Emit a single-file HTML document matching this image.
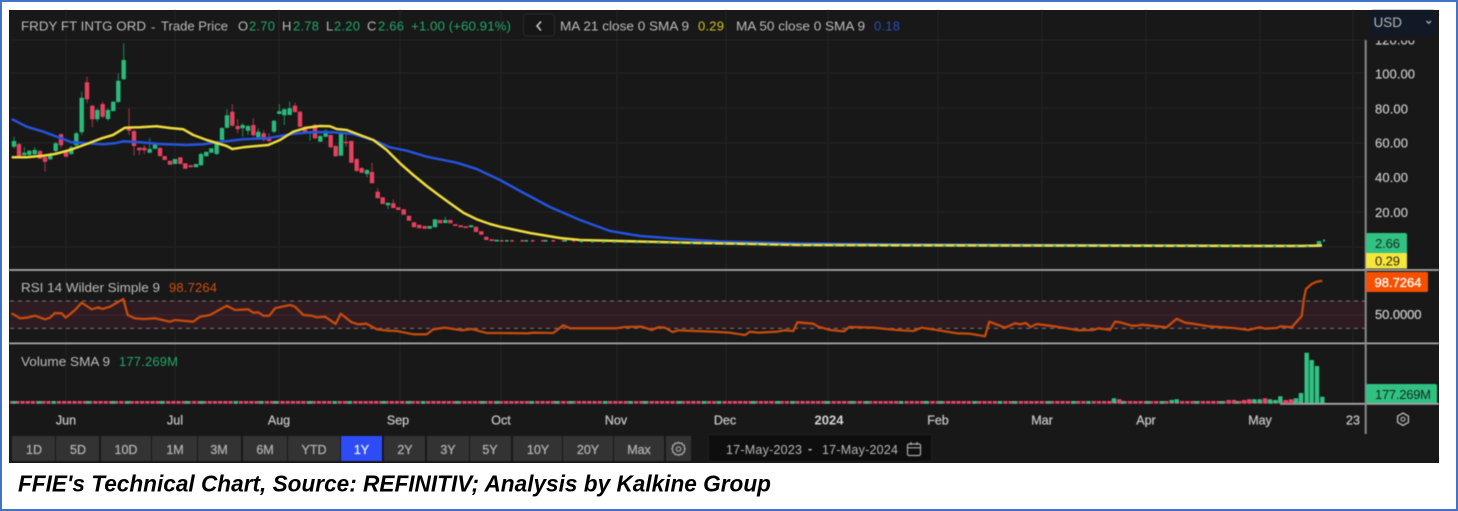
<!DOCTYPE html>
<html><head><meta charset="utf-8"><style>
html,body{margin:0;padding:0;background:#fff;width:1458px;height:511px;overflow:hidden}
svg{display:block}
text{font-family:"Liberation Sans",sans-serif}
.b{filter:blur(.5px)}
.h{font-size:13px;fill:#bcbcbc}
.g{font-size:13px;fill:#22a869}
.y{font-size:13px;fill:#c8c8c8;stroke:#c8c8c8;stroke-width:.2}
.x{font-size:12.5px;fill:#c0c0c0;stroke:#c0c0c0;stroke-width:.3;text-anchor:middle}
.t{font-size:12.5px;fill:#aeaeae;stroke:#aeaeae;stroke-width:.3;text-anchor:middle}
</style></head><body>
<svg width="1458" height="511" viewBox="0 0 1458 511" xmlns="http://www.w3.org/2000/svg">
<rect width="1458" height="511" fill="#fff"/>
<rect x="1" y="1" width="1456" height="509" fill="none" stroke="#4472c4" stroke-width="2"/>
<rect x="9" y="10" width="1430" height="453" fill="#181818"/>
<g class="b">
<path d="M10 40H1365M10 73H1365M10 108H1365M10 143H1365M10 177H1365M10 212H1365M10 247H1365M66 10V403M175 10V403M279 10V403M400 10V403M501 10V403M617 10V403M726 10V403M828 10V403M938 10V403M1042 10V403M1146 10V403M1260 10V403M1353 10V403" stroke="#242424" stroke-width="1" fill="none"/>

<path d="M14 136.7V148.3M24.3 147V156M29.3 150V156M34.7 147V155M50.3 152.7V160M55.7 141.7V152.7M71.3 146V155M76.3 131.7V146.7M81.7 91.7V135M97.3 108.3V121.7M108 108.3V120.7M113.3 101V111.7M118.3 73.3V102.7M123.7 43.3V80M149.7 138.3V153.3M155 143.3V149.3M201 152.7V165.7M216.7 140.7V155M222 127.3V140.7M227 109.3V128.3M242.7 123V136.7M248 125V135M258.3 128.3V137.3M274 120V133.3M279.3 104V114M284.3 108.3V125M289.7 101.7V115M310 130.7V140.7M320.3 135V141.7M325.7 129.3V137.3M341 132.7V155.7M367 169.3V177.3M388 202.7V209.3M445.3 216.7V223.3" stroke="#1b7a54" stroke-width="1.2" fill="none"/>
<path d="M19 142.7V156.7M40 150V159M45 156.7V171.7M61 133.3V148.3M66 150V157.3M87 76.7V103.3M92.3 105V127.3M102.7 101.7V118.3M129 108.3V135M134 130V155.7M139.3 147.3V155M144.3 145V154M160 147.3V156.7M232.3 104V126.7M237.7 119.3V133.3M253.3 118.3V136.7M263.7 130V141.7M269 133.3V142.7M295 102.7V112.7M300 110.7V127.3M305 126V134M315 124V139.3M330.7 134.3V148.3M335.7 145V156.7M346 135V146.7M351.3 140.7V162.7M356.7 158.3V171.7M361.7 167.3V173.3M372 162.7V183.3M377.7 188.3V198.3M393.3 199.3V208.3" stroke="#8f3347" stroke-width="1.2" fill="none"/>

<path d="M14 141V146.7M24.3 152.7V155M29.3 150.7V154.7M34.7 150V154.3M50.3 156V159.3M55.7 143.3V151M71.3 147.3V154M76.3 133.3V145.3M81.7 97.7V132.3M97.3 110V119.3M108 110V119M113.3 101.7V111M118.3 80.7V102M123.7 60V79.3M149.7 149V152.7M155 144.3V148.7M175 159V164M196 164V167.3M201 154V165.3M206.3 151.7V156.3M211.3 148.3V152.7M216.7 142V154M222 128V140M227 115.3V127.7M242.7 125V128.3M248 126V130.7M258.3 131.7V137.3M274 120.7V131.7M279.3 111.3V114M284.3 109.3V115.3M289.7 108.3V115M310 131.7V133.3M320.3 136V141.7M325.7 130.7V136.7M341 133.3V155.7M367 170V174M388 202.7V205.3M429.7 226V228.7M435 219.3V227.3M445.3 220V223M471 225.3V227.3M496.7 239.7V241.5M1319 241V245" stroke="#27bb7c" stroke-width="4.4" fill="none"/>
<path d="M19 144V156.7M40 151V158.7M45 157.3V161.7M61 134.3V145.3M66 151V156.7M87 82.3V99.3M92.3 105.7V119.3M102.7 104V116.7M129 126.7V130.7M134 131V146M139.3 147.7V150.3M144.3 147.7V150.3M160 148V156M164.7 156V160M170 160.7V164.7M180.3 157.3V164M185.3 163.3V168.7M190.7 165.3V167.3M232.3 111.7V125.7M237.7 126V129.3M253.3 125V135.3M263.7 133.3V140M269 137.7V141M295 105.7V112M300 111.7V126.7M305 126.7V133.3M315 124.7V138.3M330.7 135V147.3M335.7 146V156.3M346 141.7V143.3M351.3 141V162.7M356.7 159V171M361.7 168V172.7M372 172V183.3M377.7 191.7V198.3M382.7 197.3V204M393.3 203.3V208M398.3 207.3V210M403.7 209.3V214.7M409 215.7V220.7M414 222.3V227.3M419.3 224.7V228.3M424.7 226V228.7M440 220V223.3M450.3 220V223.3M455.3 224.3V226M460.7 225.3V227.3M465.7 226.3V228M476 226.7V232M481.3 231.3V234.7M486.3 236.7V240M491.7 239.3V241" stroke="#e6415e" stroke-width="4.4" fill="none"/>
<path d="M500 240.8H575" stroke="#d8465f" stroke-width="1.6" stroke-dasharray="3.5 6.8"/>
<path d="M505 240.8H575" stroke="#27bb7c" stroke-width="1.6" stroke-dasharray="3.5 16"/>

<path d="M11.7 119L26.7 126.7L43.3 131.7L56.7 136.7L71.7 142.3L86.7 143.3L103.3 144.3L115 143.3L123.3 141.3L140 142.3L160 144L186.7 145L203 144.3L220 142L243.3 139.3L266.7 138.3L290 134.3L310 132.3L333.3 132.3L353.3 134L373.3 140L390 147.3L406.7 150.7L426.7 156.7L456.7 162.7L476.7 169L500 180L520 191L550 207L580 220L610 231L640 236L680 239L720 241.5L800 243.5L900 244.5L1320 246" fill="none" stroke="#2454e0" stroke-width="2.5" stroke-linejoin="round"/>
<path d="M11.7 157.3L26.7 157.3L43 155.7L55 154L70 150L86.7 144L101.7 138.3L113 135L125 127.7L140 127.3L156.7 126.3L170 128L183.3 129.3L193.3 135L206.7 140L226.7 146L232.3 149L243.3 147.3L256.7 146L268.3 145L280 140L293.3 131.7L306.7 127.7L320 126L330 126.3L336.7 129L346.7 130L360 135L373.3 140L386.7 150L400 163.3L413.3 175L426.7 186L440 196L450 203.3L463.3 212.7L476.7 219.3L490 224L500 226.7L530 233L560 238L580 240L620 241L700 243L800 245L1000 245.5L1300 246L1322 245.5" fill="none" stroke="#f1dc3c" stroke-width="2.5" stroke-linejoin="round"/>
<path d="M580 241.5L700 243.5L800 245.5L1310 246.5" fill="none" stroke="#2bb57f" stroke-width="1.6" stroke-dasharray="3 8"/>
<path d="M1323 240.5H1325" stroke="#27bb7c" stroke-width="2"/>

<rect x="10" y="301" width="1355" height="27.5" fill="#2f1c22"/>
<path d="M10 315H1365" stroke="#3b2a30" stroke-width="1"/>
<path d="M10 301H1365M10 328.4H1365" stroke="#7a7a7a" stroke-width="1" stroke-dasharray="4 4" fill="none"/>
<path d="M11.7 313.3L20 318.3L26.7 317.7L35 315.7L45 319.3L50 317.7L55 313L61.7 313.3L65.7 317.7L75 310L81.7 302.7L91.7 309.3L98.3 307.3L102.3 309L110 306.7L123.3 299L127.7 315L135 318.3L143.3 319L155 318.3L170 321.7L175 320L193.3 321.7L200 316.7L210 315L226.7 305.7L235 310L248.3 309.3L253.3 312.7L258.3 312.3L263.3 315.7L269.3 315.7L275 308.3L290 305L295 306.7L303.3 315L311.7 315.7L316.7 317.3L325 316.7L335.7 324L340.7 313.7L351.7 322.3L358.3 324.3L366.7 323.7L376.7 329.3L388.3 330.7L396.7 331L413.3 334.3L426.7 334.3L433.3 329.3L445 327.7L461.7 330.3L471.7 329L486.7 333L500 333L528 333.3L533 332.7L553.3 333L563.3 325.3L570 328.3L616.7 328.3L625 327L641.7 326.7L651.7 330L658.3 327.3L665 327.7L672.7 332L678.3 330.3L713.3 331.7L730 332.7L745 335L750 331.7L758.3 332.7L776.7 331.7L785 330.3L793.3 331L797.3 322.3L813.3 323.7L818.3 326.7L830 330L844 331.3L849.3 327L873.3 327.7L896.7 330L913.3 331L921.7 327.7L936.7 330L956.7 333.3L970 333.7L985 336.3L989.3 321.7L1000 325.7L1005 327.7L1015 323.3L1020 324.3L1026 323L1030.7 327L1036.7 324L1056.7 326.7L1078.3 330.3L1093.3 330L1098.3 328.3L1110 330L1115 321.7L1120 322.3L1131.7 325.7L1136 325.7L1141.7 324.7L1166.7 327.3L1176.7 318.7L1185 322.7L1193.3 323.7L1208.3 326.3L1233.3 328L1248.3 330L1260 327.3L1265 328.7L1276.7 328L1280.7 326.3L1291.7 327.3L1301.7 316L1304 298.3L1306 289L1311.7 284L1316.7 281.7L1322.3 280.7" fill="none" stroke="#c74a0c" stroke-width="2.3" stroke-linejoin="round"/>

<path d="M9 270H1439M9 343.4H1439M1280 403.8H1439" stroke="#a8a8a8" stroke-width="1.8" fill="none"/>
<path d="M1365.7 40V434" stroke="#8a8a8a" stroke-width="2" fill="none"/>

<path d="M10 402.4H1300" stroke="#e0486c" stroke-width="2.8" stroke-dasharray="4.3 .9"/>
<path d="M12 402.4H1300" stroke="#2fc283" stroke-width="2.8" stroke-dasharray="4.3 20.7 4.3 10.3 4.3 30" fill="none"/>
<path d="M1114 403V398.3M1171.7 403V400M1176.7 403V399.3M1254.3 403V399.3M1259.7 403V399.3M1270 403V399.3M1275.3 403V400M1280.3 403V396.3M1296 403V398.3M1301 403V393M1306.7 403V352.7M1311.7 403V360M1317 403V366M1322.3 403V396.7" stroke="#2fc283" stroke-width="4.4" fill="none"/>
<path d="M1119.3 403V399.3M1249.3 403V399.3M1244 403V400M1234 403V400M1228.7 403V400M1265 403V398.3M1285.7 403V400M1291 403V399.3" stroke="#e6456a" stroke-width="4.4" fill="none"/>

<text class="h" x="21" y="30.5" textLength="125" lengthAdjust="spacingAndGlyphs">FRDY FT INTG ORD</text>
<text class="h" x="151" y="31.5">-</text>
<text class="h" x="161" y="30.5" textLength="67" lengthAdjust="spacingAndGlyphs">Trade Price</text>
<text class="h" x="238" y="30.5">O</text><text class="g" x="249" y="30.5" textLength="26">2.70</text>
<text class="h" x="282" y="30.5">H</text><text class="g" x="293" y="30.5" textLength="26">2.78</text>
<text class="h" x="326" y="30.5">L</text><text class="g" x="334" y="30.5" textLength="26">2.20</text>
<text class="h" x="367" y="30.5">C</text><text class="g" x="378" y="30.5" textLength="26">2.66</text>
<text class="g" x="411" y="30.5" textLength="100" lengthAdjust="spacingAndGlyphs">+1.00 (+60.91%)</text>
<rect x="523.5" y="14" width="31" height="22" rx="3" fill="#161616" stroke="#2a2a2e"/>
<path d="M541 21.5L537 26L541 30.5" fill="none" stroke="#d0d0d0" stroke-width="1.5"/>
<text class="h" x="560" y="30.5" textLength="129" lengthAdjust="spacingAndGlyphs">MA 21 close 0 SMA 9</text>
<text x="698" y="30.5" font-size="13" fill="#d4c41c" textLength="26">0.29</text>
<text class="h" x="736" y="30.5" textLength="129" lengthAdjust="spacingAndGlyphs">MA 50 close 0 SMA 9</text>
<text x="874" y="30.5" font-size="13" fill="#2850bc" textLength="26">0.18</text>

<rect x="1370" y="10" width="66" height="26" rx="3" fill="#121926"/>
<text x="1373.5" y="27" font-size="13.5" fill="#b6b6b6" textLength="28.5" lengthAdjust="spacingAndGlyphs">USD</text>
<path d="M1426.5 21L1428.7 23.2L1431 21" fill="none" stroke="#b0b0b0" stroke-width="1.3"/>

<clipPath id="c"><rect x="1367" y="40.5" width="72" height="400"/></clipPath>
<g clip-path="url(#c)">
<text class="y" x="1375" y="44.5" textLength="40">120.00</text>
<text class="y" x="1375" y="78.5" textLength="40">100.00</text>
<text class="y" x="1375" y="113.5" textLength="33">80.00</text>
<text class="y" x="1375" y="147.5" textLength="33">60.00</text>
<text class="y" x="1375" y="182" textLength="33">40.00</text>
<text class="y" x="1375" y="217" textLength="33">20.00</text>
</g>
<path d="M1366 235a2 2 0 0 1 2-2h37a2 2 0 0 1 2 2v18h-41z" fill="#2fc283"/>
<rect x="1366" y="253" width="41" height="15.5" fill="#f5e63c"/>
<text x="1375" y="248" font-size="13" fill="#1c2a22" textLength="25">2.66</text>
<text x="1375" y="265.5" font-size="13" fill="#2c2a10" textLength="25">0.29</text>
<rect x="1366" y="272" width="62" height="20" rx="1.5" fill="#f55000"/>
<text x="1374.5" y="287" font-size="13" fill="#fff" stroke="#fff" stroke-width=".3" textLength="47">98.7264</text>
<text x="1375" y="319" font-size="13" fill="#c4c4c4" stroke="#c4c4c4" stroke-width=".3" textLength="46.5">50.0000</text>
<path d="M1366 386a2 2 0 0 1 2-2h67a2 2 0 0 1 2 2v17h-71z" fill="#2fc283"/>
<text x="1375" y="399" font-size="13" fill="#17261e" textLength="56">177.269M</text>

<text class="h" x="21" y="292" textLength="139" lengthAdjust="spacingAndGlyphs">RSI 14 Wilder Simple 9</text>
<text x="169" y="292" font-size="13" fill="#d24f0c" textLength="48">98.7264</text>
<text class="h" x="21" y="366" textLength="89" lengthAdjust="spacingAndGlyphs">Volume SMA 9</text>
<text x="119" y="366" font-size="13" fill="#22a869" textLength="59">177.269M</text>

<text class="x" x="66" y="424.5">Jun</text>
<text class="x" x="175" y="424.5">Jul</text>
<text class="x" x="279" y="424.5">Aug</text>
<text class="x" x="398" y="424.5">Sep</text>
<text class="x" x="501" y="424.5">Oct</text>
<text class="x" x="616" y="424.5">Nov</text>
<text class="x" x="725" y="424.5">Dec</text>
<text x="829" y="424.5" font-size="13" font-weight="700" fill="#d4d4d4" text-anchor="middle">2024</text>
<text class="x" x="938" y="424.5">Feb</text>
<text class="x" x="1042" y="424.5">Mar</text>
<text class="x" x="1146" y="424.5">Apr</text>
<text class="x" x="1260" y="424.5">May</text>
<text class="x" x="1353" y="424.5">23</text>
<path d="M1403 413l5.4 3.1v6.2l-5.4 3.1l-5.4-3.1v-6.2z" fill="none" stroke="#b4b4b4" stroke-width="1.4"/>
<circle cx="1403" cy="419.2" r="2" fill="none" stroke="#b4b4b4" stroke-width="1.2"/>

<g fill="#333333">
<rect x="12" y="436" width="43" height="25"/><rect x="56" y="436" width="43" height="25"/><rect x="101" y="436" width="50" height="25"/><rect x="152" y="436" width="45" height="25"/><rect x="198" y="436" width="43" height="25"/><rect x="243" y="436" width="44" height="25"/><rect x="288" y="436" width="52" height="25"/>
<rect x="384" y="436" width="41" height="25"/><rect x="427" y="436" width="42" height="25"/><rect x="470" y="436" width="41" height="25"/><rect x="513" y="436" width="49" height="25"/><rect x="563" y="436" width="50" height="25"/><rect x="614" y="436" width="50" height="25"/><rect x="666" y="436" width="25" height="25"/>
</g>
<rect x="341" y="436" width="41" height="25" fill="#2e4cf6"/>
<text class="t" x="34" y="454">1D</text><text class="t" x="78" y="454">5D</text><text class="t" x="126" y="454">10D</text><text class="t" x="175" y="454">1M</text><text class="t" x="219" y="454">3M</text><text class="t" x="265" y="454">6M</text><text class="t" x="314" y="454">YTD</text>
<text x="361.5" y="454" font-size="12.5" fill="#e8ecff" stroke="#e8ecff" stroke-width=".3" text-anchor="middle">1Y</text>
<text class="t" x="405" y="454">2Y</text><text class="t" x="448" y="454">3Y</text><text class="t" x="490" y="454">5Y</text><text class="t" x="538" y="454">10Y</text><text class="t" x="588" y="454">20Y</text><text class="t" x="639" y="454">Max</text>
<g transform="translate(678.5 449) scale(.85) translate(-678.5 -449.5)">
<path d="M678.5 441.5l1.7 1.4 2.2-.4 1 2 2 .9-.3 2.2 1.3 1.7-1.3 1.7.3 2.2-2 .9-1 2-2.2-.4-1.7 1.4-1.7-1.4-2.2.4-1-2-2-.9.3-2.2-1.3-1.7 1.3-1.7-.3-2.2 2-.9 1-2 2.2.4z" fill="none" stroke="#a8a8a8" stroke-width="1.5"/>
<circle cx="678.5" cy="449.5" r="2.6" fill="none" stroke="#a8a8a8" stroke-width="1.4"/>
</g>
<rect x="708.5" y="434.5" width="223" height="27" rx="2" fill="#0e0e0e" stroke="#1f1f1f"/>
<text x="726" y="454" font-size="12.5" fill="#b8b8b8" textLength="76">17-May-2023</text>
<text x="808" y="453" font-size="12.5" fill="#b8b8b8" font-weight="700">-</text>
<text x="822" y="454" font-size="12.5" fill="#b8b8b8" textLength="76">17-May-2024</text>
<rect x="907.5" y="444" width="13" height="11.5" rx="1.5" fill="none" stroke="#aaa" stroke-width="1.2"/>
<path d="M907.5 447.8H920.5M911 442V445M917 442V445" stroke="#aaa" stroke-width="1.2" fill="none"/>
</g>
<text x="18" y="491.5" font-size="23" font-weight="700" font-style="italic" fill="#000" textLength="753" lengthAdjust="spacingAndGlyphs">FFIE's Technical Chart, Source: REFINITIV; Analysis by Kalkine Group</text>
</svg>
</body></html>
